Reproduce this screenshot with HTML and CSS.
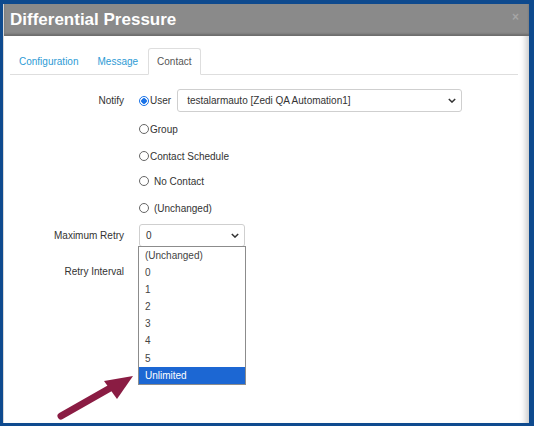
FILE: index.html
```html
<!DOCTYPE html>
<html>
<head>
<meta charset="utf-8">
<link rel="stylesheet" href="styles.css">
</head>
<body>
<div class="frame">
  <div class="dialog">
    <div class="header">
      <h1 class="title">Differential Pressure</h1>
      <span class="close">×</span>
    </div>
    <div class="content">
      <div class="tabs">
        <span class="tab">Configuration</span>
        <span class="tab">Message</span>
        <span class="tab active">Contact</span>
      </div>
      <div class="form">
        <div class="row notify-row">
          <div class="label">Notify</div>
          <div class="field">
            <div class="opt first"><span class="radio checked"></span><span>User</span>
              <div class="select wide"><span>testalarmauto [Zedi QA Automation1]</span><svg class="chev" viewBox="0 0 10 6" width="8" height="5"><path d="M1 1 L5 5 L9 1" fill="none" stroke="#333" stroke-width="1.8"/></svg></div>
            </div>
            <div class="opt g1"><span class="radio"></span><span>Group</span></div>
            <div class="opt"><span class="radio"></span><span>Contact Schedule</span></div>
            <div class="opt sp g3"><span class="radio"></span><span>No Contact</span></div>
            <div class="opt sp"><span class="radio"></span><span>(Unchanged)</span></div>
          </div>
        </div>
        <div class="row retry-row">
          <div class="label">Maximum Retry</div>
          <div class="field">
            <div class="select small"><span>0</span><svg class="chev" viewBox="0 0 10 6" width="8" height="5"><path d="M1 1 L5 5 L9 1" fill="none" stroke="#333" stroke-width="1.8"/></svg></div>
            <ul class="list">
              <li>(Unchanged)</li>
              <li>0</li>
              <li>1</li>
              <li>2</li>
              <li>3</li>
              <li>4</li>
              <li>5</li>
              <li class="sel">Unlimited</li>
            </ul>
          </div>
        </div>
        <div class="row interval-row">
          <div class="label">Retry Interval</div>
          <div class="field"></div>
        </div>
      </div>
    </div>
  </div>
</div>
<svg class="arrow" width="534" height="426" viewBox="0 0 534 426">
  <line x1="61" y1="416" x2="112" y2="387" stroke="#8a1c43" stroke-width="7" stroke-linecap="round"/>
  <polygon points="133,376 104,381 117,399" fill="#8a1c43"/>
</svg>
</body>
</html>
```
FILE: styles.css
```css
html, body {
  margin: 0;
  padding: 0;
}
body {
  position: relative;
  width: 534px;
  height: 426px;
  background: #0e4a8e;
  font-family: "Liberation Sans", Arial, sans-serif;
  overflow: hidden;
}
.frame {
  padding: 4px 5px 3px 3px;
  height: 419px;
}
.dialog {
  position: relative;
  height: 419px;
  background: #fff;
  border-left: 1px solid #d8d8d8;
  box-shadow: inset -7px 0 6px -4px #c8c8c8;
  overflow: hidden;
}
.header {
  height: 32px;
  background: #8a8a8a;
  display: flex;
  align-items: center;
  justify-content: space-between;
  padding: 0 10px 0 6px;
  box-shadow: 0 -2px 2px #6d6d6d inset;
}
.title {
  margin: 0;
  font-size: 17px;
  font-weight: bold;
  color: #fff;
}
.close {
  color: #a5a5a5;
  font-size: 12px;
  font-weight: bold;
  margin-top: -6px;
}
.content {
  padding: 12px 11px 0 6px;
}
.tabs {
  display: flex;
  height: 26px;
  border-bottom: 1px solid #dedede;
  font-size: 10px;
}
.tab {
  padding: 8px 9px 0 9px;
  color: #2d9bd5;
  margin-right: 1px;
}
.tab.active {
  color: #555;
  border: 1px solid #dedede;
  border-bottom-color: #fff;
  border-radius: 3px 3px 0 0;
  margin-bottom: -1px;
  padding: 7px 8px 0 8px;
  background: #fff;
}
.form {
  font-size: 10px;
  color: #333;
}
.row {
  display: grid;
  grid-template-columns: 114px 1fr;
  column-gap: 15px;
}
.label {
  text-align: right;
}
.notify-row {
  padding-top: 14px;
}
.notify-row .label {
  padding-top: 6px;
}
.opt {
  display: flex;
  align-items: center;
  height: 14px;
  margin-top: 13px;
}
.opt.first {
  margin-top: 0;
  height: 23px;
}
.opt.g1 {
  margin-top: 10px;
}
.opt.g3 {
  margin-top: 11px;
}
.opt.sp .radio {
  margin-right: 5px;
}
.radio {
  width: 10px;
  height: 10px;
  border: 1px solid #666;
  border-radius: 50%;
  margin-right: 1px;
  box-sizing: border-box;
  flex: none;
}
.radio.checked {
  border-color: #1a73e8;
  background: radial-gradient(circle, #1a73e8 0 2.5px, #fff 3px);
}
.select {
  display: flex;
  align-items: center;
  justify-content: space-between;
  box-sizing: border-box;
  height: 23px;
  border: 1px solid #cfcfcf;
  border-radius: 3px;
  padding: 0 5px 0 9px;
  background: #fff;
}
.select.wide {
  width: 285px;
  margin-left: 6px;
}
.select.small {
  width: 106px;
  padding-left: 6px;
}
.retry-row {
  margin-top: 9px;
}
.retry-row .label {
  padding-top: 6px;
}
.retry-row .field {
  position: relative;
}
.interval-row .label {
  padding-top: 19px;
}
.list {
  position: absolute;
  left: -1px;
  top: 22px;
  width: 108px;
  box-sizing: border-box;
  margin: 0;
  padding: 0;
  list-style: none;
  background: #fff;
  border: 1px solid #8c8c8c;
  z-index: 2;
}
.list li {
  height: 17.1px;
  line-height: 17px;
  padding-left: 6px;
  color: #444;
}
.list li.sel {
  background: #1c67d3;
  color: #fff;
}
.arrow {
  position: absolute;
  left: 0;
  top: 0;
  pointer-events: none;
}
```
